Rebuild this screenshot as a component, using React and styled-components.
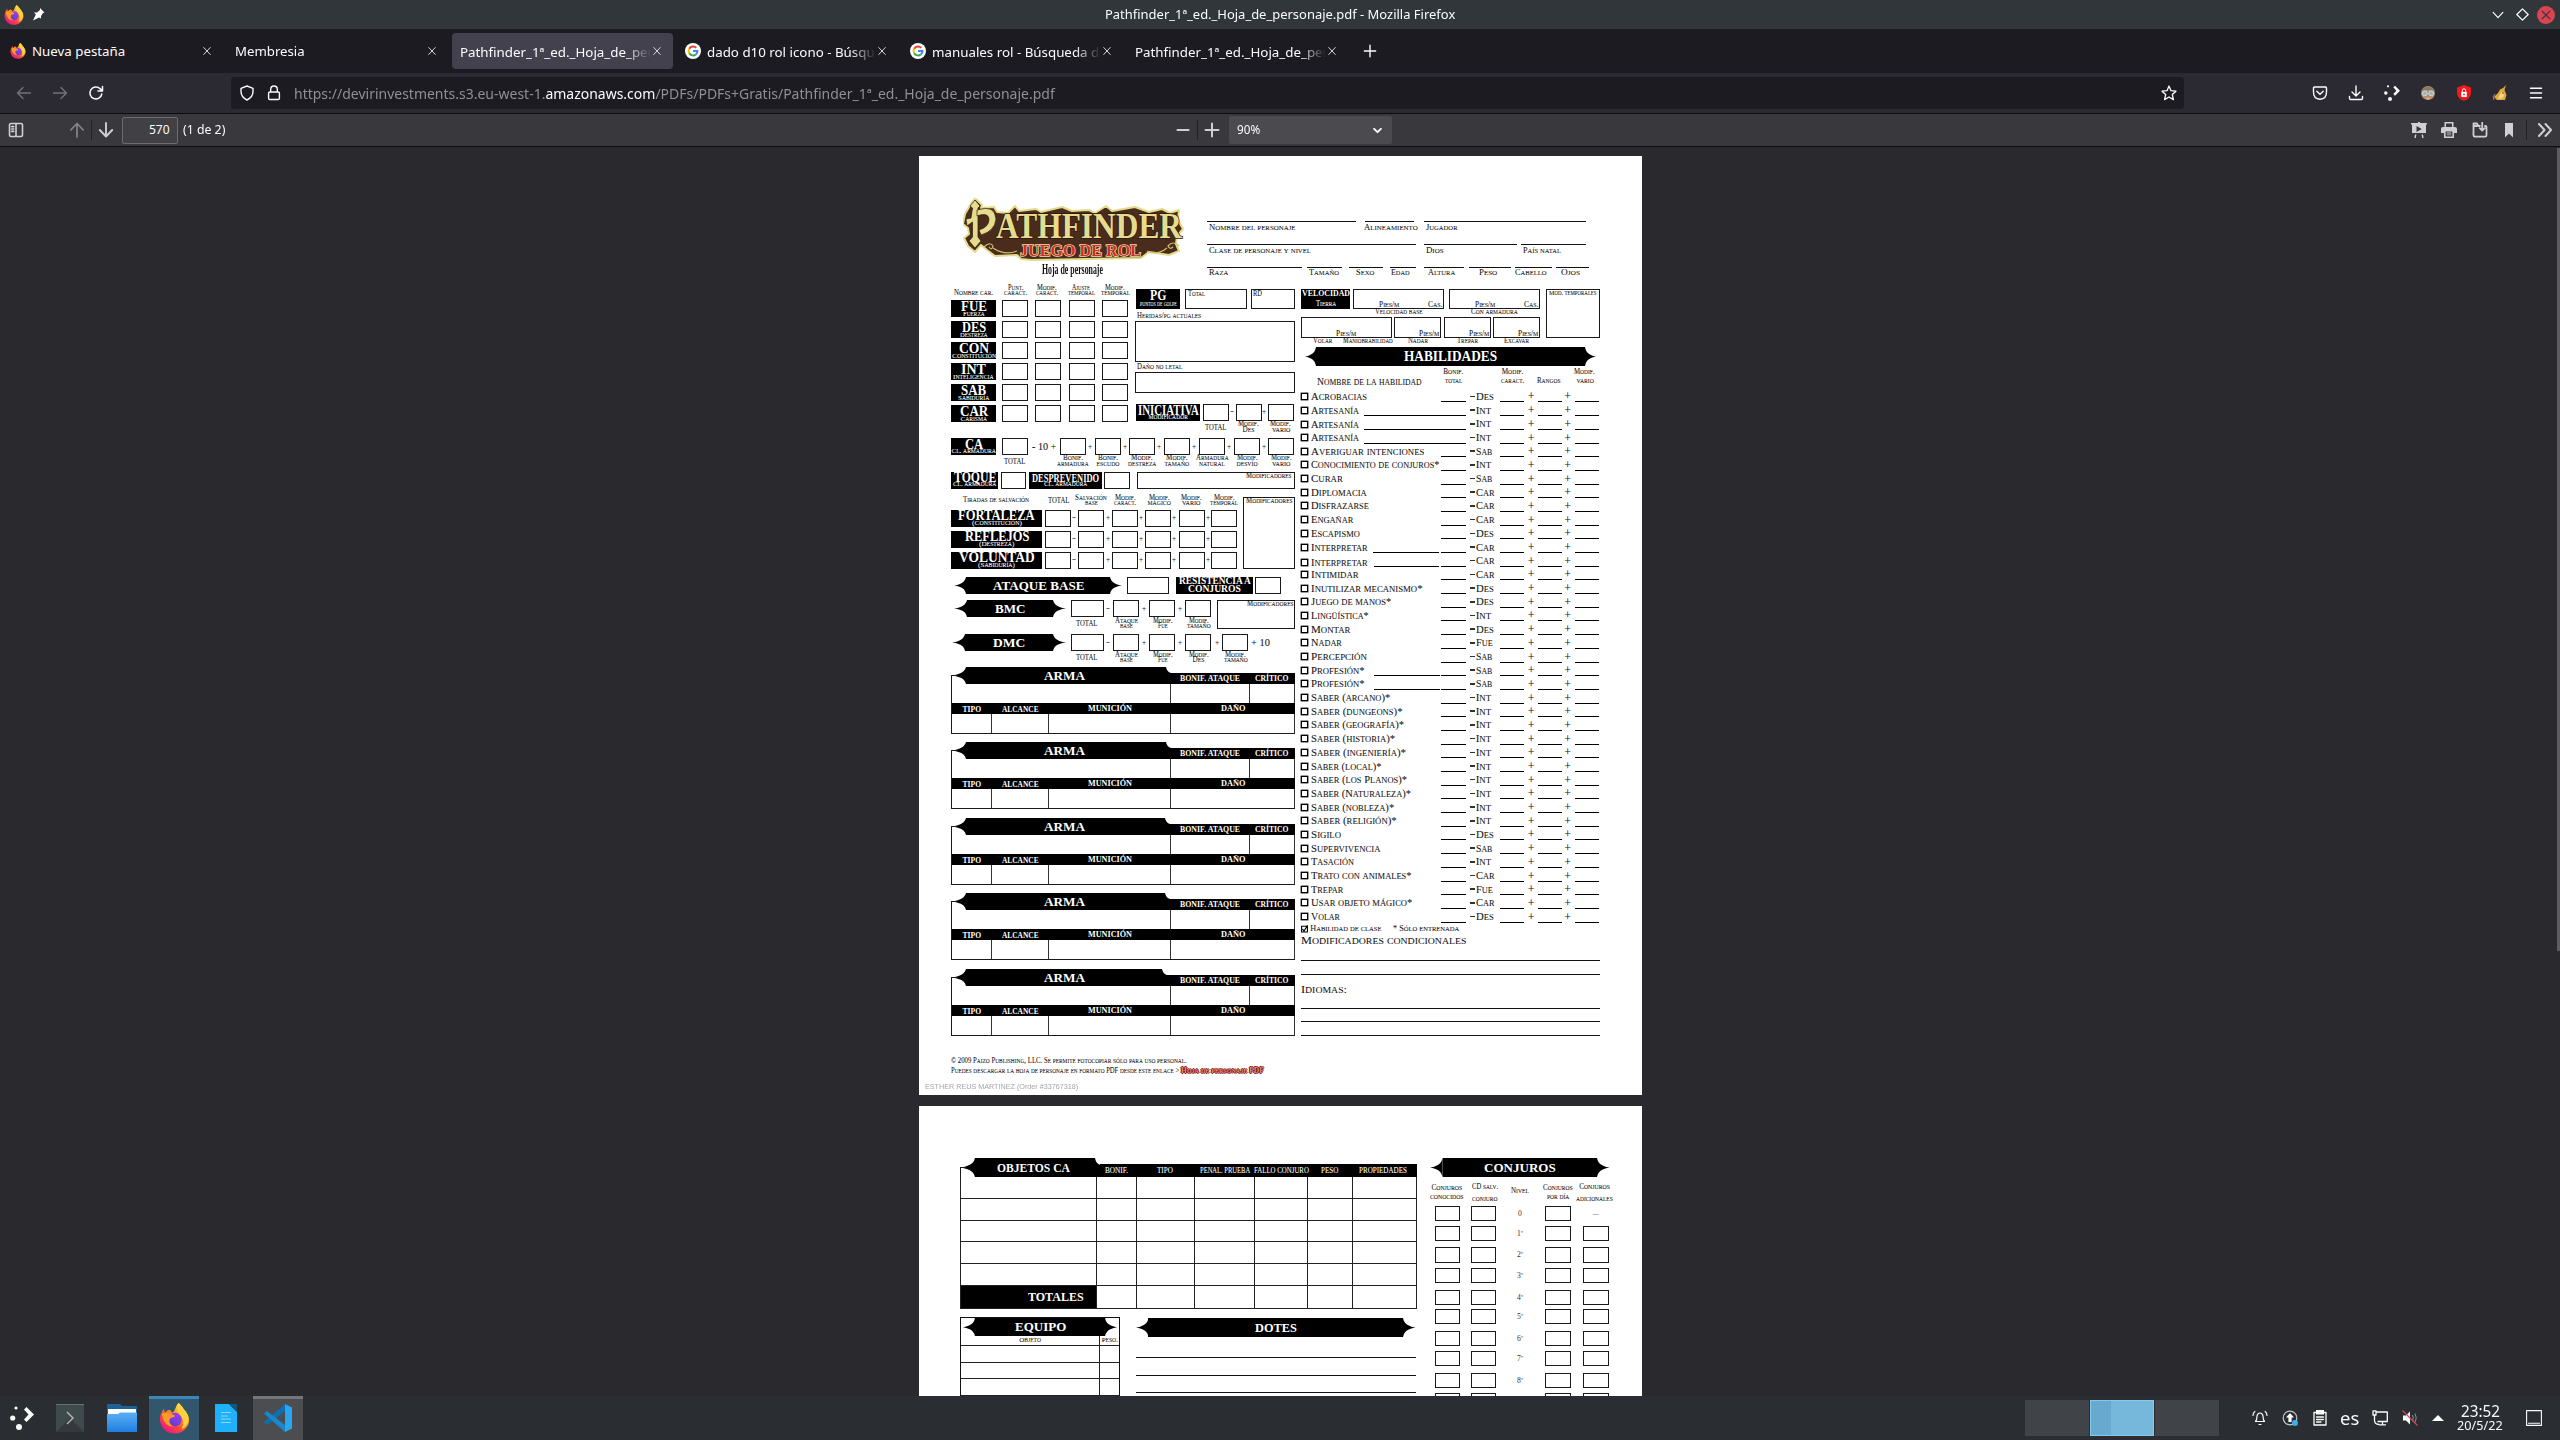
import React, { useLayoutEffect, useRef, useState } from 'react';
import styled, { createGlobalStyle } from 'styled-components';

const Global = createGlobalStyle`
  html, body { margin: 0; padding: 0; background: #2a2a2e; overflow: hidden; }
  * { box-sizing: border-box; }
  svg { display: block; flex: none; }
`;

const SANS = '"Noto Sans", "Liberation Sans", sans-serif';
const SERIF = '"Liberation Serif", serif';

/* ---------- text that is set to a measured width ---------- */

const FitBox = styled.span`
  display: block;
  flex: none;
  width: ${(p) => p.$w}px;
  height: ${(p) => p.$size}px;
  font: ${(p) => (p.$bold ? 700 : 400)} ${(p) => p.$size}px/1 ${(p) => p.$font || SERIF};
  color: ${(p) => p.$color || 'inherit'};
  text-shadow: ${(p) => p.$shadow || 'none'};
  -webkit-text-stroke: ${(p) => (!p.$font && !p.$bold ? '0.06px' : '0')};
`;
const FitText = styled.span`
  display: inline-block;
  white-space: pre;
  transform-origin: 0 50%;
`;
const Small = styled.span`
  font-size: 0.8em;
  text-transform: uppercase;
`;

const LOWER = /([a-zñáéíóúü]+)/;
const smallCaps = (text) =>
  typeof text === 'string' ? text.split(LOWER).map((s, i) => (i % 2 ? <Small key={i}>{s}</Small> : s)) : text;

function Fit({ w, size = 7, bold, font, color, shadow, children }) {
  const ref = useRef(null);
  const [k, setK] = useState(1);
  useLayoutEffect(() => {
    const n = ref.current.offsetWidth;
    if (n) setK(w / n);
  }, [w, size]);
  const drop = font ? 0 : 0.4;
  return (
    <FitBox $w={w} $size={size} $bold={bold} $font={font} $color={color} $shadow={shadow}>
      <FitText ref={ref} style={{ transform: `translateY(${drop}px) scaleX(${k})` }}>{font ? children : smallCaps(children)}</FitText>
    </FitBox>
  );
}

/* ---------- track layout: [start, size] pairs turned into grid tracks ---------- */

const tracks = (at, o) => {
  let p = o;
  return at
    .map(([s, n]) => {
      const g = Math.max(0, s - p);
      p = s + n;
      return `${g.toFixed(2)}px ${n}px`;
    })
    .join(' ');
};
const place = (at, axis) =>
  at.map((_, i) => `& > :nth-child(${i + 1}) { grid-${axis}: ${2 * i + 2}; }`).join('\n');

const Strip = styled.div`
  display: grid;
  width: 100%;
  height: ${(p) => (p.$h ? `${p.$h}px` : '100%')};
  grid-template-columns: ${(p) => tracks(p.$at, p.$o)};
  grid-template-rows: 100%;
  align-items: center;
  justify-items: center;
  & > * { grid-row: 1; }
  ${(p) => place(p.$at, 'column')}
`;
const Rows = styled.div`
  display: grid;
  width: 100%;
  height: 100%;
  grid-template-rows: ${(p) => tracks(p.$at, p.$o)};
  grid-template-columns: 100%;
  align-items: center;
  justify-items: ${(p) => p.$align || 'center'};
  & > * { grid-column: 1; }
  ${(p) => place(p.$at, 'row')}
`;

const Box = styled.div`
  width: 100%;
  height: 100%;
  border: ${(p) => p.$b || 1}px solid #1a1a1a;
  display: flex;
  align-items: ${(p) => p.$v || 'flex-start'};
  justify-content: ${(p) => p.$j || 'flex-start'};
  padding: ${(p) => p.$pad || '0'};
`;
const Plate = styled(Rows)`
  background: #000;
  color: #fff;
`;
const Rule = styled.div`
  width: 100%;
  height: 1px;
  background: #111;
`;
const PairGrid = styled.div`
  display: grid;
  grid-template-rows: ${(p) => p.$p}px ${(p) => p.$p}px;
  align-items: center;
  justify-items: center;
`;
const Pair = ({ a, b, pitch = 5.4 }) => (
  <PairGrid $p={pitch}>
    <Fit w={a[1]} size={7.2}>{a[0]}</Fit>
    <Fit w={b[1]} size={7.2}>{b[0]}</Fit>
  </PairGrid>
);
const Named = ({ main, mw, sub, sw, size = 14, y1 = 7, y2 = 14.4 }) => (
  <Plate $o={0} $at={[[y1, 0], [y2, 0]]}>
    <Fit w={mw} size={size} bold>{main}</Fit>
    <Fit w={sw} size={7}>{sub}</Fit>
  </Plate>
);
const Sign = ({ children }) => <Fit w={4.5} size={8}>{children}</Fit>;
const Total = () => <Fit w={21.5} size={7.8}>TOTAL</Fit>;

/* ---------- black ribbon with pointed ends ---------- */

const Ribbon = styled.div`
  display: flex;
  width: 100%;
  height: 100%;
`;
const RibbonBody = styled.div`
  flex: 1;
  background: #000;
  color: #fff;
  display: flex;
  align-items: center;
  justify-content: center;
`;
const Tip = ({ w = 12, flip, frame }) => (
  <svg width={w} height="100%" viewBox="0 0 12 18" preserveAspectRatio="none" transform={flip ? 'scale(-1 1)' : undefined}>
    <path d="M12.2 0H12Q11 5.5 6 7.3Q3.5 8.6 0 9Q3.5 9.4 6 10.7Q11 12.5 12 18H12.2Z" fill="#000" />
    {frame && <path d="M0 8.6H5V9.4H.8V18H0Z" fill="#1a1a1a" />}
  </svg>
);
const Notch = () => (
  <svg width="5" height="100%" viewBox="0 0 5 18" preserveAspectRatio="none">
    <path d="M0 0Q1 5.5 5 6.4V18H0Z" fill="#000" />
  </svg>
);
const Banner = ({ w, tip, size = 13.5, children }) => (
  <Ribbon>
    <Tip w={tip} />
    <RibbonBody><Fit w={w} size={size} bold>{children}</Fit></RibbonBody>
    <Tip w={tip} flip />
  </Ribbon>
);

/* ---------- logo ---------- */

const Logo = () => (
  <svg width="222" height="64" viewBox="0 0 222 64">
    <path
      d="M12 0L19 7L18 10L31 9L34 14L45 15L52 8L56 13L73 11L78 14L99 9L109 13L126 12L132 15L143 8L149 13L172 9L186 14L199 11L207 15L216 12L215 22L220 31L214 38L213 46L216 53L206 57L186 54L178 60L68 62L58 61L54 57L32 58L24 52L18 47L12 54L5 48L1 40L6 36L5 30L0 26L2 16L6 9Z"
      fill="#4a2c1c" stroke="#e4dc8c" strokeWidth="2" strokeLinejoin="round"
    />
    <path d="M21 49Q27 43 30 48Q29 53 26 49M30 50Q42 58 54 53M216 48Q210 42 205 48Q207 52 210 49M204 50Q194 58 184 53" fill="none" stroke="#cdbd72" strokeWidth="1.2" />
    <path d="M12 2L17 8L15 10V39L18 43L12 50L6 43L9.5 39V24L4 28L3 21L8 20L9.5 10L7 8Z" fill="#e6dc8e" stroke="#2e170c" strokeWidth=".7" />
    <path d="M14 12Q32 6 33 21Q32 33 18 37L16 32Q26 29 26 21Q25 14 14 18Z" fill="#e6dc8e" stroke="#2e170c" strokeWidth=".7" />
    <text x="33" y="40" textLength="186" lengthAdjust="spacingAndGlyphs" fontFamily="Liberation Serif, serif" fontWeight="700" fontSize="36" fill="#e6dc8e" stroke="#2e170c" strokeWidth="1.6" paintOrder="stroke">ATHFINDER</text>
    <text x="57" y="58" textLength="121" lengthAdjust="spacingAndGlyphs" fontFamily="Liberation Serif, serif" fontWeight="700" fontSize="16.5" fill="#cf2e2a" stroke="#ecdfa6" strokeWidth="1.4" paintOrder="stroke">JUEGO DE ROL</text>
  </svg>
);

/* ---------- page one ---------- */

const Sheet = styled.section`
  flex: none;
  width: 723px;
  height: ${(p) => p.$h}px;
  background: #fff;
  color: #111;
  overflow: hidden;
`;

const FIELD_LINES = [
  {
    y: 221,
    cells: [[1207, 149], [1365, 49], [1424, 162]],
    labels: [['Nombre del personaje', 1209, 87], ['Alineamiento', 1364, 54], ['Jugador', 1426, 32]],
  },
  {
    y: 244,
    cells: [[1207, 209], [1424, 93], [1521, 65]],
    labels: [['Clase de personaje y nivel', 1209, 102], ['Dios', 1426, 18], ['País natal', 1523, 38]],
  },
  {
    y: 267,
    cells: [[1207, 95], [1307, 35], [1349, 34], [1390, 26], [1424, 40], [1469, 42], [1515, 37], [1556, 33]],
    labels: [['Raza', 1209, 19], ['Tamaño', 1309, 30], ['Sexo', 1356, 18], ['Edad', 1391, 19], ['Altura', 1428, 27], ['Peso', 1479, 18], ['Cabello', 1515, 32], ['Ojos', 1561, 19]],
  },
];

const HojaTitle = styled.div`
  margin-left: -3px;
`;
const Header = () => (
  <Strip $h={84} $o={919} $at={[[963, 222], [1207, 382]]}>
    <Rows $o={198} $at={[[198, 64], [270, 0]]}>
      <Logo />
      <HojaTitle><Fit w={61} size={14} font={SERIF} bold>Hoja de personaje</Fit></HojaTitle>
    </Rows>
    <Rows $o={198} $at={[[221, 1], [227.3, 0], [244, 1], [250.2, 0], [267, 1], [272.5, 0]]}>
      {FIELD_LINES.flatMap((f) => [
        <Strip key={f.y} $h={1} $o={1207} $at={f.cells}>{f.cells.map((c) => <Rule key={c[0]} />)}</Strip>,
        <Strip key={`${f.y}l`} $h={8} $o={1207} $at={f.labels.map((l) => [l[1], l[2]])}>
          {f.labels.map((l) => <Fit key={l[0]} w={l[2]} size={8.8}>{l[0]}</Fit>)}
        </Strip>,
      ])}
    </Rows>
  </Strip>
);

const ABILITIES = [
  ['FUE', 26, 'Fuerza', 22], ['DES', 24, 'Destreza', 28], ['CON', 30, 'Constitución', 44],
  ['INT', 25, 'Inteligencia', 41], ['SAB', 25, 'Sabiduría', 31], ['CAR', 28, 'Carisma', 26],
];

const LowText = styled.div`
  padding-top: 5px;
`;
const Abilities = () => (
  <Rows $o={284} $at={[[291.3, 0], ...ABILITIES.map((_, i) => [300 + i * 21, 17])]}>
    <Strip $h={11} $o={951} $at={[[954, 39], [1015.7, 0], [1047.5, 0], [1081.5, 0], [1115.5, 0]]}>
      <LowText><Fit w={39} size={7.2}>Nombre car.</Fit></LowText>
      <Pair a={['Punt.', 16]} b={['caract.', 23]} />
      <Pair a={['Modif.', 20]} b={['caract.', 22]} />
      <Pair a={['Ajuste', 18]} b={['temporal', 27]} />
      <Pair a={['Modif.', 20]} b={['temporal', 29]} />
    </Strip>
    {ABILITIES.map(([m, mw, s, sw]) => (
      <Strip key={m} $o={951} $at={[[951, 45], [1002, 26], [1035, 26], [1069, 26], [1102, 26]]}>
        <Named main={m} mw={mw} sub={s} sw={sw} />
        <Box /><Box /><Box /><Box />
      </Strip>
    ))}
  </Rows>
);

const Inset = styled.div`
  padding-left: 2px;
`;
const Health = () => (
  <Rows $o={284} $align="start" $at={[[289, 20], [316.4, 0], [321, 41], [367.4, 0], [372, 21], [404, 17], [427.5, 0]]}>
    <Strip $o={1135} $at={[[1136, 44], [1185, 62], [1251, 44]]}>
      <Plate $o={0} $at={[[7, 0], [15.5, 0]]}>
        <Fit w={16} size={14} bold>PG</Fit>
        <Fit w={37} size={6.6}>puntos de golpe</Fit>
      </Plate>
      <Box $pad="1px 2px"><Fit w={17} size={7.2}>Total</Fit></Box>
      <Box $pad="1px 1px"><Fit w={9} size={7.2}>RD</Fit></Box>
    </Strip>
    <Inset><Fit w={64} size={7.2}>Heridas/pg actuales</Fit></Inset>
    <Box />
    <Inset><Fit w={45} size={7.2}>Daño no letal</Fit></Inset>
    <Box />
    <Strip $o={1135} $at={[[1136, 64], [1203, 26], [1232.5, 0], [1236, 26], [1264.6, 0], [1268, 26]]}>
      <Named main="INICIATIVA" mw={61} sub="modificador" sw={39} size={14} y1={6.7} y2={13.8} />
      <Box /><Sign>-</Sign><Box /><Sign>+</Sign><Box />
    </Strip>
    <Strip $h={11} $o={1135} $at={[[1216, 0], [1248.5, 0], [1280.5, 0]]}>
      <Total />
      <Pair a={['Modif.', 21]} b={['Des', 12]} />
      <Pair a={['Modif.', 21]} b={['vario', 18]} />
    </Strip>
  </Rows>
);

const CA_BOXES = [1060, 1095, 1129, 1164, 1199, 1234, 1268];
const ArmorClass = () => (
  <Strip $o={951} $at={[[951, 45], [1002, 26], [1032, 24], ...CA_BOXES.flatMap((x, i) => (i < 6 ? [[x, 26], [x + 30.2, 0]] : [[x, 26]]))]}>
    <Named main="CA" mw={18} sub="Cl. armadura" sw={44} y1={6.5} y2={13.8} />
    <Box />
    <Fit w={24} size={11}>- 10 +</Fit>
    {CA_BOXES.flatMap((x, i) => (i < 6 ? [<Box key={x} />, <Sign key={`s${x}`}>+</Sign>] : [<Box key={x} />]))}
  </Strip>
);
const CA_LABELS = [
  [['Bonif.', 20], ['armadura', 32]], [['Bonif.', 20], ['escudo', 23]], [['Modif.', 22], ['destreza', 28]],
  [['Modif.', 22], ['tamaño', 25]], [['Armadura', 33], ['natural', 26]], [['Modif.', 21], ['desvío', 21]], [['Modif.', 21], ['vario', 18]],
];

const SAVE_BOXES = [1045, 1078.5, 1112, 1145, 1179, 1211];
const SAVES = [['FORTALEZA', 77, '(Constitución)', 50], ['REFLEJOS', 64, '(Destreza)', 35], ['VOLUNTAD', 76, '(Sabiduría)', 37]];
const SaveNotes = styled.div`
  width: 100%;
  height: 100%;
  padding-top: 2px;
`;
const Saves = () => (
  <Strip $o={951} $at={[[951, 286], [1243, 52]]}>
    <Rows $o={495} $at={[[500.8, 0], [510, 17], [531, 17], [552, 17]]}>
      <Strip $h={11} $o={951} $at={[[963, 66], [1058.5, 0], [1091, 0], [1125, 0], [1159, 0], [1191, 0], [1224, 0]]}>
        <Fit w={66} size={7.2}>Tiradas de salvación</Fit>
        <Total />
        <Pair a={['Salvación', 32]} b={['base', 13]} />
        <Pair a={['Modif.', 21]} b={['caract.', 22]} />
        <Pair a={['Modif.', 21]} b={['mágico', 23]} />
        <Pair a={['Modif.', 21]} b={['vario', 18]} />
        <Pair a={['Modif.', 21]} b={['temporal', 28]} />
      </Strip>
      {SAVES.map(([m, mw, s, sw]) => (
        <Strip key={m} $o={951} $at={[[951, 91], ...SAVE_BOXES.flatMap((x, i) => (i < 5 ? [[x, 26], [x + 29.6, 0]] : [[x, 26]]))]}>
          <Named main={m} mw={mw} sub={s} sw={sw} y1={6} y2={13.4} />
          {SAVE_BOXES.flatMap((x, i) => (i < 5 ? [<Box key={x} />, <Sign key={`s${x}`}>{i ? '+' : '-'}</Sign>] : [<Box key={x} />]))}
        </Strip>
      ))}
    </Rows>
    <SaveNotes><Box $j="center"><Fit w={47} size={7.2}>Modificadores</Fit></Box></SaveNotes>
  </Strip>
);

const ManeuverRow = ({ name, w, x, n, extra }) => {
  const boxes = [1071, 1113, 1149, 1185, 1222.5].slice(0, n);
  const at = [[x, 1066 - x]];
  boxes.forEach((b, i) => {
    at.push([b, i ? 26 : 33]);
    if (i < n - 1) at.push([[1108, 1144, 1180.7, 1217][i], 0]);
  });
  if (extra) at.push([1251, 19]);
  return (
    <Strip $o={951} $at={at}>
      <Banner w={w} tip={13}>{name}</Banner>
      {boxes.flatMap((b, i) => (i < n - 1 ? [<Box key={b} />, <Sign key={`s${b}`}>{i ? '+' : '-'}</Sign>] : [<Box key={b} />]))}
      {extra && <Fit w={19} size={11}>+ 10</Fit>}
    </Strip>
  );
};

const WeaponHead = styled.div`
  display: flex;
  height: 17px;
  width: 100%;
`;
const WeaponTab = styled.div`
  width: ${(p) => p.$w}px;
  padding-right: ${(p) => p.$pr || 0}px;
  background: #000;
  color: #fff;
  display: flex;
  align-items: center;
  justify-content: center;
`;
const WeaponCaps = styled.div`
  flex: 1;
  align-self: flex-end;
  height: 11px;
  background: #000;
  color: #fff;
`;
const Cells = styled.div`
  display: grid;
  width: 100%;
  height: ${(p) => p.$h}px;
  grid-template-columns: ${(p) => p.$cols};
  background: ${(p) => (p.$dark ? '#000' : 'transparent')};
  color: ${(p) => (p.$dark ? '#fff' : 'inherit')};
  align-items: center;
  justify-items: center;
  border-left: 1px solid #1a1a1a;
  border-bottom: ${(p) => (p.$end ? '1px solid #1a1a1a' : '0')};
`;
const Cell = styled.div`
  width: 100%;
  height: 100%;
  border-right: 1px solid #333;
`;
const WeaponLabel = styled.div`
  padding-top: 2px;
`;
const Weapon = ({ tab = 199 }) => (
  <div>
    <WeaponHead>
      <Tip w={15} frame />
      <WeaponTab $w={tab} $pr={tab - 196}><Fit w={41} size={13.5} bold>ARMA</Fit></WeaponTab>
      <Notch />
      <WeaponCaps>
        <Strip $o={951 + 20 + tab} $at={[[1210, 0], [1271.5, 0]]}>
          <Fit w={60} size={7.6} bold>BONIF. ATAQUE</Fit>
          <Fit w={33} size={7.6} bold>CRÍTICO</Fit>
        </Strip>
      </WeaponCaps>
    </WeaponHead>
    <Cells $h={19} $cols="219px 79px 1fr"><Cell /><Cell /><Cell /></Cells>
    <Cells $h={11} $dark $cols="40px 57px 122px 1fr">
      <WeaponLabel><Fit w={19} size={7.6} bold>TIPO</Fit></WeaponLabel>
      <WeaponLabel><Fit w={37} size={7.6} bold>ALCANCE</Fit></WeaponLabel>
      <Fit w={44} size={7.6} bold>MUNICIÓN</Fit>
      <Fit w={24} size={7.6} bold>DAÑO</Fit>
    </Cells>
    <Cells $h={20} $end $cols="40px 57px 122px 1fr"><Cell /><Cell /><Cell /><Cell /></Cells>
  </div>
);

const Full = styled.div`
  width: 100%;
  height: 100%;
`;
const LeftColumn = () => (
  <Rows
    $o={284}
    $at={[[284, 150], [438, 17], [461.5, 0], [472, 17], [495, 74], [577, 17], [600, 29], [634, 17], [658.3, 0], [667, 67], [742.4, 67], [818, 67], [893, 67], [969, 67]]}
  >
    <Strip $o={951} $at={[[951, 177], [1135, 160]]}>
      <Abilities />
      <Health />
    </Strip>
    <ArmorClass />
    <Strip $h={11} $o={951} $at={[[1014.5, 0], ...CA_BOXES.map((x) => [x + 13, 0])]}>
      <Total />
      {CA_LABELS.map(([a, b], i) => <Pair key={i} a={a} b={b} />)}
    </Strip>
    <Strip $o={951} $at={[[951, 47], [1001, 25], [1029, 73], [1104, 26], [1137, 158]]}>
      <Named main="TOQUE" mw={42} sub="Cl. armadura" sw={43} y1={5.8} y2={13} />
      <Box />
      <Named main="DESPREVENIDO" mw={67} sub="Cl. armadura" sw={43} size={13} y1={5.8} y2={13} />
      <Box />
      <Box $j="flex-end" $pad="0 2px 0 0"><Fit w={46} size={7.2}>Modificadores</Fit></Box>
    </Strip>
    <Saves />
    <Strip $o={951} $at={[[954, 168], [1127, 42], [1176, 77], [1255, 26]]}>
      <Banner w={91} tip={12}>ATAQUE BASE</Banner>
      <Box />
      <Plate $o={0} $at={[[4.2, 0], [12.4, 0]]}>
        <Fit w={72} size={9.8} bold>RESISTENCIA A</Fit>
        <Fit w={53} size={9.8} bold>CONJUROS</Fit>
      </Plate>
      <Box />
    </Strip>
    <Strip $o={951} $at={[[951, 262], [1217, 78]]}>
      <Rows $o={600} $at={[[600, 17], [624.2, 0]]}>
        <ManeuverRow name="BMC" w={31} x={954} n={4} />
        <Strip $h={11} $o={951} $at={[[1087, 0], [1126, 0], [1162.5, 0], [1198.5, 0]]}>
          <Total />
          <Pair a={['Ataque', 23]} b={['base', 13]} />
          <Pair a={['Modif.', 20]} b={['Fue', 10]} />
          <Pair a={['Modif.', 20]} b={['tamaño', 24]} />
        </Strip>
      </Rows>
      <Box $j="flex-end"><Fit w={47} size={7.2}>Modificadores</Fit></Box>
    </Strip>
    <ManeuverRow name="DMC" w={32} x={952} n={5} extra />
    <Strip $h={11} $o={951} $at={[[1087, 0], [1126, 0], [1162.5, 0], [1198.5, 0], [1235.5, 0]]}>
      <Total />
      <Pair a={['Ataque', 23]} b={['base', 13]} />
      <Pair a={['Modif.', 20]} b={['Fue', 10]} />
      <Pair a={['Modif.', 20]} b={['Des', 12]} />
      <Pair a={['Modif.', 21]} b={['tamaño', 24]} />
    </Strip>
    <Full><Weapon tab={200} /></Full>
    <Full><Weapon tab={200} /></Full>
    <Full><Weapon tab={199} /></Full>
    <Full><Weapon tab={199} /></Full>
    <Full><Weapon tab={196} /></Full>
  </Rows>
);

const Units = styled.div`
  display: flex;
  gap: 29px;
`;
const BoxedUnits = ({ cas, pr = 1 }) => (
  <Box $v="flex-end" $j="flex-end" $pad={`0 ${pr}px 0 0`}>
    <Units>
      <Fit w={20} size={7.4}>Pies/m</Fit>
      {cas && <Fit w={14} size={7.4}>Cas.</Fit>}
    </Units>
  </Box>
);

const Speed = () => (
  <Strip $o={1301} $at={[[1301, 239], [1546, 54]]}>
    <Rows $o={289} $at={[[289, 20], [312, 0], [317, 21], [340.8, 0]]}>
      <Strip $o={1301} $at={[[1301, 49], [1353, 91], [1449, 91]]}>
        <Plate $o={0} $at={[[4.2, 0], [14.6, 0]]}>
          <Fit w={48} size={9} bold>VELOCIDAD</Fit>
          <Fit w={20} size={7.4}>Tierra</Fit>
        </Plate>
        <BoxedUnits cas />
        <BoxedUnits cas />
      </Strip>
      <Strip $h={7} $o={1301} $at={[[1375, 48], [1471, 47]]}>
        <Fit w={48} size={7.4}>Velocidad base</Fit>
        <Fit w={47} size={7.4}>Con armadura</Fit>
      </Strip>
      <Strip $o={1301} $at={[[1301, 91], [1394, 47], [1444, 47], [1493, 47]]}>
        <BoxedUnits pr={35} /><BoxedUnits /><BoxedUnits /><BoxedUnits />
      </Strip>
      <Strip $h={7} $o={1301} $at={[[1313, 19], [1343, 50], [1408, 20], [1457, 21], [1504, 25]]}>
        <Fit w={19} size={7.4}>Volar</Fit>
        <Fit w={50} size={7.4}>Maniobrabilidad</Fit>
        <Fit w={20} size={7.4}>Nadar</Fit>
        <Fit w={21} size={7.4}>Trepar</Fit>
        <Fit w={25} size={7.4}>Excavar</Fit>
      </Strip>
    </Rows>
    <Box $j="center"><Fit w={48} size={7}>Mod. temporales</Fit></Box>
  </Strip>
);

const SKILLS = [
  ['Acrobacias', 55.7, 'Des'], ['Artesanía', 48, 'Int', 1364, 77], ['Artesanía', 48, 'Int', 1364, 77, 1], ['Artesanía', 48, 'Int', 1364, 77],
  ['Averiguar intenciones', 113, 'Sab'], ['Conocimiento de conjuros*', 128, 'Int'], ['Curar', 32, 'Sab'], ['Diplomacia', 56, 'Car'],
  ['Disfrazarse', 58, 'Car'], ['Engañar', 42, 'Car'], ['Escapismo', 49, 'Des'], ['Interpretar', 57, 'Car', 1373, 66],
  ['Interpretar', 57, 'Car', 1374, 65, 4], ['Intimidar', 48, 'Car'], ['Inutilizar mecanismo*', 112, 'Des'], ['Juego de manos*', 80, 'Des'],
  ['Lingüística*', 58, 'Int'], ['Montar', 39, 'Des'], ['Nadar', 31, 'Fue'], ['Percepción', 56, 'Sab'],
  ['Profesión*', 54, 'Sab', 1374, 66], ['Profesión*', 54, 'Sab', 1374, 66], ['Saber (arcano)*', 79, 'Int'], ['Saber (dungeons)*', 92, 'Int'],
  ['Saber (geografía)*', 93, 'Int'], ['Saber (historia)*', 84, 'Int'], ['Saber (ingeniería)*', 95, 'Int'], ['Saber (local)*', 71, 'Int'],
  ['Saber (los Planos)*', 96, 'Int'], ['Saber (Naturaleza)*', 100, 'Int'], ['Saber (nobleza)*', 83, 'Int'], ['Saber (religión)*', 86, 'Int'],
  ['Sigilo', 30, 'Des'], ['Supervivencia', 69, 'Sab'], ['Tasación', 43, 'Int'], ['Trato con animales*', 101, 'Car'],
  ['Trepar', 32, 'Fue'], ['Usar objeto mágico*', 101, 'Car'], ['Volar', 29, 'Des'],
];
const STAT_W = { Des: 17.5, Int: 15, Sab: 16, Car: 19, Fue: 17 };

const SkillList = styled.div`
  width: 100%;
  height: 100%;
  display: grid;
  grid-auto-rows: 13.7px;
`;
const Tick = styled.span`
  width: 7px;
  height: 7px;
  border: 1px solid #000;
  box-shadow: 0 0 0 0.4px #000;
  margin-top: ${(p) => p.$dy || 0}px;
`;
const Left = styled.div`
  width: 100%;
  display: flex;
  padding-top: ${(p) => p.$dy || 0}px;
`;
const Under = styled.span`
  width: 100%;
  height: 1px;
  align-self: end;
  margin-bottom: 0.8px;
  background: #000;
`;
const Dash = styled.span`
  width: 100%;
  height: 1.6px;
  background: #333;
`;
const Skill = ({ s }) => {
  const [name, w, stat, bx = 1439, bw = 0, dy = 0] = s;
  return (
    <Strip $o={1301} $at={[[1301, 7], [1311, Math.min(w, bx - 1311)], [bx, bw], [1441.3, 24.5], [1470, 5.5], [1475.7, 20], [1500, 24], [1531.3, 0], [1537.7, 24.3], [1567.7, 0], [1575, 24.5]]}>
      <Tick $dy={dy} />
      <Left $dy={dy}><Fit w={w} size={11}>{name}</Fit></Left>
      <Under />
      <Under />
      <Dash />
      <Left><Fit w={STAT_W[stat]} size={11}>{stat}</Fit></Left>
      <Under />
      <Fit w={7} size={12}>+</Fit>
      <Under />
      <Fit w={7} size={12}>+</Fit>
      <Under />
    </Strip>
  );
};

const RightColumn = () => (
  <Rows
    $o={284}
    $align="start"
    $at={[[289, 49], [347, 19], [377, 0], [389.6, 534.3], [929.2, 0], [941, 0], [960, 1], [974, 1], [989.3, 0], [1008, 1], [1021, 1], [1035, 1]]}
  >
    <Speed />
    <Strip $o={1301} $at={[[1304.5, 291.5]]}><Banner w={93} tip={11} size={14}>HABILIDADES</Banner></Strip>
    <Strip $h={18.4} $o={1301} $at={[[1316.7, 105], [1453.3, 0], [1512.7, 0], [1549, 0], [1585, 0]]}>
      <PairGrid $p={9.3}><span /><Fit w={105} size={9.8}>Nombre de la habilidad</Fit></PairGrid>
      <Pair pitch={9.3} a={['Bonif.', 20]} b={['total', 17]} />
      <Pair pitch={9.3} a={['Modif.', 22]} b={['caract.', 23]} />
      <PairGrid $p={9.3}><span /><Fit w={24} size={7.2}>Rangos</Fit></PairGrid>
      <Pair pitch={9.3} a={['Modif.', 21]} b={['vario', 17]} />
    </Strip>
    <SkillList>{SKILLS.map((s, i) => <Skill key={i} s={s} />)}</SkillList>
    <Strip $h={8} $o={1301} $at={[[1301, 7], [1310.3, 71], [1393, 66]]}>
      <svg width="7" height="8" viewBox="0 0 7 8"><path d="M.6 1.3H6.4V7H.6ZM1.5 4L3 6L6.6 .3" fill="none" stroke="#000" strokeWidth="1.1" /></svg>
      <Fit w={71} size={8.2}>Habilidad de clase</Fit>
      <Fit w={66} size={8.2}>* Sólo entrenada</Fit>
    </Strip>
    <Fit w={165} size={11}>Modificadores condicionales</Fit>
    <Rule /><Rule />
    <Fit w={45.5} size={11}>Idiomas:</Fit>
    <Rule /><Rule /><Rule />
  </Rows>
);

const PageOne = () => (
  <Sheet $h={939}>
    <Rows $o={156} $at={[[198, 84], [284, 757], [1060.7, 0], [1070.7, 0], [1087.3, 0]]}>
      <Header />
      <Strip $o={919} $at={[[951, 344], [1301, 299]]}>
        <LeftColumn />
        <RightColumn />
      </Strip>
      <Strip $h={8} $o={919} $at={[[951, 236]]}>
        <Fit w={236} size={7.8}>© 2009 Paizo Publishing, LLC. Se permite fotocopiar sólo para uso personal.</Fit>
      </Strip>
      <Strip $h={8} $o={919} $at={[[951, 228], [1181, 83]]}>
        <Fit w={228} size={7.8}>{'Puedes descargar la hoja de personaje en formato PDF desde este enlace >'}</Fit>
        <Fit w={83} size={8.4} bold color="#e8948c" shadow="0 0 1px #7a0d0d, 1px 0 0 #7a0d0d, -1px 0 0 #7a0d0d, 0 1px 0 #7a0d0d, 0 -1px 0 #7a0d0d">Hoja de personaje PDF</Fit>
      </Strip>
      <Strip $h={8} $o={919} $at={[[925, 153]]}>
        <Fit w={153} size={8} font={'"Liberation Sans", sans-serif'} color="#a3a5aa">ESTHER REUS MARTINEZ (Order #33767318)</Fit>
      </Strip>
    </Rows>
  </Sheet>
);

/* ---------- page two ---------- */

const ObjHead = styled.div`
  display: flex;
  width: 100%;
  height: 19px;
`;
const ObjCaps = styled.div`
  flex: 1;
  align-self: flex-end;
  height: 13px;
  padding-top: 1px;
  background: #000;
  color: #fff;
`;
const ObjGrid = styled.div`
  display: grid;
  grid-template-columns: 136px 39.5px 58.5px 59.5px 53px 45px 1fr;
  grid-template-rows: 21.5px 22px 21.5px 21.5px 22px 23.5px;
  border-left: 1px solid #222;
`;
const ObjCell = styled.div`
  border-right: 1px solid #222;
  border-bottom: 1px solid #222;
  background: ${(p) => (p.$dark ? '#000' : 'none')};
  color: #fff;
  display: flex;
  align-items: center;
  justify-content: flex-end;
  padding-right: 12px;
`;
const Objects = () => (
  <div>
    <ObjHead>
      <Tip w={15} frame />
      <WeaponTab $w={120} $pr={3}><Fit w={73} size={13.5} bold>OBJETOS CA</Fit></WeaponTab>
      <Notch />
      <ObjCaps>
        <Strip $o={1100} $at={[[1116, 0], [1165, 0], [1225, 0], [1281, 0], [1329.4, 0], [1383, 0]]}>
          <Fit w={23} size={7.6}>BONIF.</Fit>
          <Fit w={16} size={7.6}>TIPO</Fit>
          <Fit w={50} size={7.6}>PENAL. PRUEBA</Fit>
          <Fit w={55} size={7.6}>FALLO CONJURO</Fit>
          <Fit w={17.7} size={7.6}>PESO</Fit>
          <Fit w={47.5} size={7.6}>PROPIEDADES</Fit>
        </Strip>
      </ObjCaps>
    </ObjHead>
    <ObjGrid>
      {Array.from({ length: 42 }, (_, i) => (
        <ObjCell key={i} $dark={i === 35}>{i === 35 && <Fit w={56} size={13.5} bold>TOTALES</Fit>}</ObjCell>
      ))}
    </ObjGrid>
  </div>
);

const Gear = styled.div`
  width: 100%;
  height: 100%;
  border: 1px solid #111;
  border-bottom: 0;
  display: flex;
  flex-direction: column;
`;
const GearBanner = styled.div`
  height: 19px;
  padding: 0 2px;
`;
const GearRow = styled.div`
  display: grid;
  grid-template-columns: 139.4px 1fr;
  height: ${(p) => p.$h}px;
  flex: none;
  border-bottom: 1px solid #222;
  & > * { display: flex; align-items: center; justify-content: center; }
  & > :first-child { border-right: 1px solid #222; }
`;

const LEVEL_ROWS = [1206, 1226, 1247.5, 1268, 1290, 1309, 1331, 1351, 1373, 1393];
const LEVELS = ['0', '1º', '2º', '3º', '4º', '5º', '6º', '7º', '8º', ''];
const NivelBox = styled.div`
  padding-bottom: 6px;
`;
const Spells = () => (
  <Rows $o={1158} $at={[[1158, 19], [1193.3, 0], ...LEVEL_ROWS.map((y) => [y, 15.3])]}>
    <Banner w={71.5} tip={12.5}>CONJUROS</Banner>
    <Strip $h={14} $o={1430} $at={[[1447, 0], [1485.3, 0], [1520, 0], [1558, 0], [1594.7, 0]]}>
      <Pair pitch={9.4} a={['Conjuros', 31]} b={['conocidos', 34]} />
      <Pair pitch={12.4} a={['CD salv.', 26]} b={['conjuro', 26]} />
      <NivelBox><Fit w={18} size={7.4}>Nivel</Fit></NivelBox>
      <Pair pitch={9.4} a={['Conjuros', 30]} b={['por día', 22]} />
      <Pair pitch={12.4} a={['Conjuros', 31]} b={['adicionales', 37]} />
    </Strip>
    {LEVEL_ROWS.map((y, i) => (
      <Strip key={y} $o={1430} $at={[[1434.5, 25.5], [1470.5, 25.5], [1520, 0], [1545, 25.5], [1583, 25.5]]}>
        <Box $b={1.5} />
        <Box $b={1.5} />
        {i < 9 ? <Fit w={LEVELS[i].length > 1 ? 6 : 4} size={7.6} font={SERIF} color="#333">{LEVELS[i]}</Fit> : <span />}
        <Box $b={1.5} />
        {i ? <Box $b={1.5} /> : <Fit w={6} size={6} font={SERIF}>—</Fit>}
      </Strip>
    ))}
  </Rows>
);

const Shift = styled.div`
  width: 100%;
  height: 100%;
  padding-top: 52px;
`;
const PageTwo = () => (
  <Sheet $h={290}>
    <Strip $h={290} $o={919} $at={[[960, 456.5], [1430, 179]]}>
      <Rows $o={1106} $at={[[1158, 151.5], [1317, 79]]}>
        <Full><Objects /></Full>
        <Strip $o={960} $at={[[960, 160], [1135.7, 280]]}>
          <Gear>
            <GearBanner><Banner w={51} tip={12}>EQUIPO</Banner></GearBanner>
            <GearRow $h={9.5}>
              <div><Fit w={22} size={7}>Objeto</Fit></div>
              <div><Fit w={16} size={7}>Peso.</Fit></div>
            </GearRow>
            <GearRow $h={17}><i /><i /></GearRow>
            <GearRow $h={16.6}><i /><i /></GearRow>
            <GearRow $h={16.6}><i /><i /></GearRow>
          </Gear>
          <Rows $o={1317} $at={[[1318, 19], [1357, 1], [1375, 1], [1392, 1]]}>
            <Banner w={42} tip={12.5}>DOTES</Banner>
            <Rule /><Rule /><Rule />
          </Rows>
        </Strip>
      </Rows>
      <Shift><Spells /></Shift>
    </Strip>
  </Sheet>
);

/* ---------- browser chrome ---------- */

const Screen = styled.div`
  width: 2560px;
  height: 1440px;
  display: flex;
  flex-direction: column;
  background: #2a2a2e;
  color: #fbfbfe;
  font-family: ${SANS};
  overflow: hidden;
`;
const TitleBar = styled.header`
  height: 29px;
  background: #31363b;
  color: #fcfcfc;
`;
const TabBar = styled.div`
  height: 44px;
  background: #1c1b22;
  display: flex;
  padding-left: 2px;
`;
const Tab = styled.div`
  width: 221px;
  margin: 4px 4px 4px 0;
  height: 36px;
  border-radius: 4px;
  background: ${(p) => (p.$on ? '#42414d' : 'none')};
  display: flex;
  align-items: center;
  padding: 0 12px 0 8px;
  gap: 2px;
`;
const TabIcon = styled.span`
  margin-right: 4px;
`;
const TabText = styled.div`
  flex: 1;
  min-width: 0;
  overflow: hidden;
  white-space: nowrap;
  font: 400 13.33px/20px ${SANS};
  padding: ${(p) => (p.$fade ? '3px 0 1px' : '6px 0 4px')};
  mask-image: ${(p) => (p.$fade ? 'linear-gradient(to left, transparent, #000 26px)' : 'none')};
`;
const TabClose = styled.span`
  padding-bottom: 1px;
`;
const NavBar = styled.div`
  height: 40px;
  background: #2b2a33;
`;
const Url = styled.div`
  width: 100%;
  height: 32px;
  border-radius: 4px;
  background: #1c1b22;
  display: flex;
  align-items: center;
  padding: 0 7px 0 8px;
`;
const UrlText = styled.div`
  flex: 1;
  color: #8f8f97;
  b { font-weight: 400; color: #fbfbfe; }
`;
const Slot = styled.div`
  width: ${(p) => p.$w || 16}px;
  display: flex;
  justify-content: center;
`;
const PdfBar = styled.div`
  height: 34px;
  background: #38383d;
  border-top: 1px solid #0c0c0d;
  border-bottom: 1px solid #0c0c0d;
`;
const PageInput = styled.div`
  width: 100%;
  height: 27px;
  border: 1px solid #6b6b70;
  border-radius: 2px;
  background: #404045;
  display: flex;
  align-items: center;
  justify-content: flex-end;
  padding-right: 7px;
`;
const Zoom = styled.div`
  width: 100%;
  height: 28px;
  border-radius: 2px;
  background: #4a4a4f;
  display: flex;
  align-items: center;
  justify-content: space-between;
  padding: 0 10px 0 8px;
`;
const Split = styled.span`
  width: 1px;
  height: 20px;
  background: #222226;
`;
const Viewer = styled.main`
  height: 1249px;
  background: #2a2a2e;
  display: flex;
  justify-content: space-between;
  overflow: hidden;
`;
const Pages = styled.div`
  margin-left: 919px;
  display: flex;
  flex-direction: column;
  gap: 11px;
  padding-top: 9px;
`;
const Scroll = styled.div`
  width: 3px;
  height: 803px;
  margin-top: 1px;
  background: #5c5c61;
`;
const PlusBox = styled.div`
  align-self: center;
`;

const Firefox = ({ s, id }) => (
  <svg width={s} height={s} viewBox="0 0 32 32">
    <defs>
      <linearGradient id={`${id}a`} x1=".85" y1=".1" x2=".2" y2=".95">
        <stop offset="0" stopColor="#fff44f" /><stop offset=".35" stopColor="#ff9a1f" />
        <stop offset=".65" stopColor="#ff4a3c" /><stop offset="1" stopColor="#e31587" />
      </linearGradient>
      <linearGradient id={`${id}b`} x1=".8" y1="0" x2=".2" y2="1">
        <stop offset="0" stopColor="#a33cf2" /><stop offset="1" stopColor="#5b3fc8" />
      </linearGradient>
    </defs>
    <path d="M20 0C24 3 25 6 27 8C30 12 31.5 15 31 19C30 26 24 31.5 16 31.5C7 31.5 1 25 1 17C1 12 3 9 5 6L6 10C8 8 9 7 11 7L14 10C17 8 17 3 20 0Z" fill={`url(#${id}a)`} />
    <circle cx="16.5" cy="17" r="7" fill={`url(#${id}b)`} />
    <path d="M3 11C7 9 12 10 17 13.5C15 15.5 12 14.5 11 17C10 20 12 23 15 24C9 25 4 20 3 11Z" fill="#ff9a24" />
    <path d="M20 0C24 3 25 6 27 8C30 12 31 15 30 19C29 23 26 26 23 27C26 23 25.5 17 22.5 13C19 9 17.5 5 20 0Z" fill="#ffd33e" />
  </svg>
);
const Google = () => (
  <svg width="16" height="16" viewBox="0 0 16 16">
    <circle cx="8" cy="8" r="8" fill="#fff" />
    <path d="M4.2 5.7A4.5 4.5 0 0 1 11.3 4.8" fill="none" stroke="#ea4335" strokeWidth="2" />
    <path d="M4.2 5.7A4.5 4.5 0 0 0 4.2 10.3" fill="none" stroke="#fbbc05" strokeWidth="2" />
    <path d="M4.2 10.3A4.5 4.5 0 0 0 10.8 11.5" fill="none" stroke="#34a853" strokeWidth="2" />
    <path d="M8 8H12.5A4.5 4.5 0 0 1 10.8 11.5" fill="none" stroke="#4285f4" strokeWidth="2" />
  </svg>
);
const Ico = ({ d, s = 16, c = '#fbfbfe', w = 1.3, fill = 'none', children }) => (
  <svg width={s} height={s} viewBox="0 0 16 16">
    {d && <path d={d} fill={fill} stroke={w ? c : 'none'} strokeWidth={w} strokeLinecap="round" strokeLinejoin="round" />}
    {children}
  </svg>
);
const X = () => <Ico s={8} w={2} c="#d8d8dc" d="M1.5 1L14.5 15M14.5 1L1.5 15" />;
const PlasmaDots = ({ s }) => (
  <svg width={s} height={s} viewBox="0 0 24 24" fill="#fcfcfc">
    <circle cx="6" cy="2" r="1.6" /><circle cx="2.7" cy="12" r="2.6" /><circle cx="9" cy="21" r="3" />
    <path d="M14 3.5L16.5 1L24 8.5L16.5 16L14 13.5L18.5 8.5Z" />
  </svg>
);

const TABS = [
  { t: 'Nueva pestaña', icon: 'f', w: 93 }, { t: 'Membresia', w: 69.5 },
  { t: 'Pathfinder_1ª_ed._Hoja_de_personaje.pdf', on: true, fade: true },
  { t: 'dado d10 rol icono - Búsqueda de Google', icon: 'g', fade: true },
  { t: 'manuales rol - Búsqueda de Google', icon: 'g', fade: true },
  { t: 'Pathfinder_1ª_ed._Hoja_de_personaje.pdf', fade: true },
];

const Chrome = () => (
  <>
    <TitleBar>
      <Strip $h={29} $o={0} $at={[[3, 21], [32, 13], [1105, 350], [2492, 12], [2516, 13], [2537, 18]]}>
        <Firefox s={20} id="t" />
        <svg width="13" height="13" viewBox="0 0 13 13"><path d="M8 0L12.5 4.5L11 5L9 8V10.5L7 9.5L1 12.5L3.8 6.5L2 4.5H5L8 2Z" fill="#fff" /></svg>
        <Fit w={350} size={13.3} font={SANS}>Pathfinder_1ª_ed._Hoja_de_personaje.pdf - Mozilla Firefox</Fit>
        <Ico s={12} w={1.6} d="M1.5 4.5L8 11.5L14.5 4.5" />
        <Ico s={13} w={1.5} d="M8 1L15 8L8 15L1 8Z" />
        <svg width="18" height="18" viewBox="0 0 18 18"><circle cx="9" cy="9" r="9" fill="#da4453" /><path d="M4.8 4.8L13.2 13.2M13.2 4.8L4.8 13.2" stroke="#31363b" strokeWidth="1.2" /></svg>
      </Strip>
    </TitleBar>
    <TabBar>
      {TABS.map((t, i) => (
        <Tab key={i} $on={t.on}>
          {t.icon && <TabIcon>{t.icon === 'f' ? <Firefox s={16} id="n" /> : <Google />}</TabIcon>}
          <TabText $fade={t.fade}>{t.w ? <Fit w={t.w} size={13.3} font={SANS}>{t.t}</Fit> : t.t}</TabText>
          <TabClose><X /></TabClose>
        </Tab>
      ))}
      <Slot $w={35}><PlusBox><Ico s={14} w={1.6} d="M8 1.5V14.5M1.5 8H14.5" /></PlusBox></Slot>
    </TabBar>
    <NavBar>
      <Strip $o={0} $at={[[16, 16], [52, 16], [88, 16], [231, 1953], [2312, 16], [2348, 16], [2384, 16], [2420, 16], [2456, 16], [2492, 16], [2528, 16]]}>
        <Ico c="#73727a" w={1.4} d="M14.5 8H1.5M7 2.5L1.5 8L7 13.5" />
        <Ico c="#73727a" w={1.4} d="M1.5 8H14.5M9 2.5L14.5 8L9 13.5" />
        <Ico w={1.5} d="M13.8 9A6 6 0 1 1 12 3.6L14.3 5.8M14.5 1.5V6H10" />
        <Url>
          <Ico w={1.4} d="M8 1L14 3.3V6.5C14 11 11 13.5 8 15C5 13.5 2 11 2 6.5V3.3Z" />
          <Slot $w={38.5}><Ico w={1.4} d="M3.8 7H12.2Q13.4 7 13.4 8.2V13.3Q13.4 14.5 12.2 14.5H3.8Q2.6 14.5 2.6 13.3V8.2Q2.6 7 3.8 7ZM4.7 7V4.3Q4.7 1 8 1Q11.3 1 11.3 4.3V7" /></Slot>
          <UrlText>
            <Fit w={761} size={14.6} font={SANS}>
              https://devirinvestments.s3.eu-west-1.<b>amazonaws.com</b>/PDFs/PDFs+Gratis/Pathfinder_1ª_ed._Hoja_de_personaje.pdf
            </Fit>
          </UrlText>
          <Ico d="M8 1L10 5.7L15 6.2L11.3 9.6L12.4 14.6L8 12L3.6 14.6L4.7 9.6L1 6.2L6 5.7Z" />
        </Url>
        <Ico w={1.4} d="M2.5 2H13.5Q14.5 2 14.5 3V7Q14.5 14 8 14.3Q1.5 14 1.5 7V3Q1.5 2 2.5 2ZM4.8 6.3L8 9.3L11.2 6.3" />
        <Ico w={1.4} d="M8 1V11M4 7L8 11L12 7M1.5 11.5V13.5Q1.5 14.5 2.5 14.5H13.5Q14.5 14.5 14.5 13.5V11.5" />
        <PlasmaDots s={16} />
        <Ico>
          <circle cx="8" cy="8" r="7" fill="#b98c6c" />
          <path d="M1.5 6A7 7 0 0 1 14.5 6Q8 4 1.5 6Z" fill="#8c7a68" />
          <circle cx="4.8" cy="8.3" r="2.4" fill="#8fb8c8" stroke="#dfe6ea" strokeWidth=".8" /><circle cx="11.2" cy="8.3" r="2.4" fill="#8fb8c8" stroke="#dfe6ea" strokeWidth=".8" />
          <path d="M5 12Q8 14 11 12L8 15Z" fill="#e0b89c" />
        </Ico>
        <Ico>
          <path d="M8 0L15 2.5V8Q15 13 8 16Q1 13 1 8V2.5Z" fill="#f01818" />
          <path d="M5.2 7H10.8V12H5.2Z" fill="#fff" /><path d="M6.3 7V5.5Q6.3 3.8 8 3.8Q9.7 3.8 9.7 5.5V7" fill="none" stroke="#fff" strokeWidth="1" />
          <circle cx="8" cy="9.4" r=".9" fill="#f01818" />
        </Ico>
        <Ico>
          <path d="M14 0L12.5 5L14.5 10L13 15H5L2 12L6 8L8 4.5L11 3Z" fill="#e0a93c" />
          <path d="M9 7L12.5 8L11 13L6 14Z" fill="#f4d784" /><path d="M2 15Q0 11 3 9" stroke="#9a938a" fill="none" />
          <circle cx="11" cy="8" r="1" fill="#d05a4a" />
        </Ico>
        <Ico w={1.5} d="M2.5 3.3H13.5M2.5 8H13.5M2.5 12.7H13.5" />
      </Strip>
    </NavBar>
    <PdfBar>
      <Strip $o={0} $at={[[8, 16], [69, 16], [91, 1], [98, 16], [122, 56], [183, 42], [1175, 16], [1197, 1], [1204, 16], [1229, 163], [2411, 16], [2441, 16], [2472, 16], [2501, 16], [2526, 1], [2537, 16]]}>
        <Ico c="#d0d0d2" w={1.6} d="M3 1.5H13Q14.5 1.5 14.5 3V13Q14.5 14.5 13 14.5H3Q1.5 14.5 1.5 13V3Q1.5 1.5 3 1.5ZM8 1.5V14.5M3.6 4.6H5.8M3.6 7H5.8M3.6 9.4H5.8" />
        <Ico c="#85858a" w={1.7} d="M8 15V1.5M1.8 8L8 1.5L14.2 8" />
        <Split />
        <Ico c="#cfcfd1" w={1.9} d="M8 1V14.5M1.8 8L8 14.5L14.2 8" />
        <PageInput><Fit w={21} size={12} font={SANS}>570</Fit></PageInput>
        <Fit w={42} size={12} font={SANS}>(1 de 2)</Fit>
        <Ico c="#cfcfd1" w={2.2} d="M2.5 8H13.5" />
        <Split />
        <Ico c="#cfcfd1" w={2} d="M8 1.5V14.5M1.5 8H14.5" />
        <Zoom><Fit w={23.5} size={12} font={SANS}>90%</Fit><Ico s={9} w={3.4} d="M2 5L8 11L14 5" /></Zoom>
        <Ico><path d="M0 1H7V0H9V1H16V2.6H15V11H1V2.6H0ZM5.5 4V10L10.8 7ZM4 12.5H5.4L4.8 16H3.4ZM10.6 12.5H12L12.6 16H11.2Z" fill="#d0d0d2" fillRule="evenodd" /></Ico>
        <Ico><path d="M3.5 0H12.5V5H14Q16 5 16 7V11H13V16H3V11H0V7Q0 5 2 5H3.5ZM5 1.5V5H11V1.5ZM4.6 9.5V14.5H11.4V9.5ZM5.8 10.6H10.2V11.4H5.8ZM5.8 12.5H10.2V13.3H5.8Z" fill="#d0d0d2" fillRule="evenodd" /></Ico>
        <Ico c="#d0d0d2" w={1.8} d="M7.8 4H6.3L5 1.5H1.5V13.3Q1.5 14.6 2.8 14.6H13.2Q14.5 14.6 14.5 13.3V5Q14.5 4 13.3 4H13M1.5 4H5M10.2 .8V8.3M7.8 6.2L10.2 8.6L12.6 6.2" />
        <Ico><path d="M4 1H12V15.5L8 11.5L4 15.5Z" fill="#d0d0d2" /></Ico>
        <Split />
        <Ico c="#d0d0d2" w={2} d="M2 2L7.5 8L2 14M8.5 2L14 8L8.5 14" />
      </Strip>
    </PdfBar>
  </>
);

/* ---------- desktop panel ---------- */

const Panel = styled.footer`
  height: 44px;
  background: #2a2e32;
`;
const Task = styled.div`
  width: 100%;
  height: 44px;
  display: flex;
  align-items: center;
  justify-content: center;
  padding-bottom: 3px;
  background: ${(p) => p.$bg};
  border-top: 3px solid ${(p) => p.$line};
`;
const Desk = styled.div`
  width: 100%;
  height: 36px;
  background: ${(p) => (p.$on ? 'linear-gradient(90deg, #68aacf 20px, #76b8dc 20px)' : '#404347')};
  border: ${(p) => (p.$on ? '1px solid #84caf0' : '0')};
`;
const Clock = styled.div`
  display: flex;
  flex-direction: column;
  align-items: center;
  gap: 1px;
`;

const Taskbar = () => (
  <Panel>
    <Strip
      $o={0}
      $at={[[10, 24], [56, 28], [107, 30], [149, 50], [211, 30], [253, 50], [2025, 64], [2090, 64], [2155, 64], [2252, 16], [2282, 16], [2312, 16], [2340, 20], [2372, 16], [2402, 16], [2432, 12], [2457, 46], [2526, 16]]}
    >
      <PlasmaDots s={24} />
      <svg width="28" height="28" viewBox="0 0 28 28"><rect width="28" height="28" fill="#3f4a4a" /><path d="M0 28L14 14L28 28Z" fill="#36393c" /><rect width="28" height="1" fill="#66706f" /><path d="M11 8L17 14L11 20" fill="none" stroke="#b5babb" strokeWidth="1.4" /></svg>
      <svg width="30" height="28" viewBox="0 0 30 28">
        <defs><linearGradient id="fo" x2="0" y2="1"><stop offset="0" stopColor="#5aaef4" /><stop offset="1" stopColor="#1f7fe0" /></linearGradient></defs>
        <path d="M0 0H13L15 2H30V10H0Z" fill="#1d6296" /><rect x="1" y="5" width="28" height="8" fill="#fff" />
        <path d="M0 10H11L13 8.6H30V28H0Z" fill="url(#fo)" />
      </svg>
      <Task $bg="#32566b" $line="#3b87b6"><Firefox s={31} id="k" /></Task>
      <svg width="22" height="28" viewBox="0 0 22 28"><path d="M0 0H14L22 8V28H0Z" fill="#1eb0fb" /><path d="M14 0L22 8V0Z" fill="#14587f" /><path d="M6 8.5H16M6 12H13M6 15H16M6 18.5H16" stroke="#8fd6fb" strokeWidth="1.1" /></svg>
      <Task $bg="#4b4d51" $line="#747679">
        <svg width="28" height="28" viewBox="0 0 28 28">
          <path d="M0 18L3 21L21 7V0Z" fill="#0f6fb4" /><path d="M0 9.5L3 7L21 21V28Z" fill="#1787cf" /><path d="M21 0L28 3.5V24.5L21 28Z" fill="#29a7ee" />
        </svg>
      </Task>
      <Desk /><Desk $on /><Desk />
      <Ico w={1.2} c="#fcfcfc" d="M3.5 11.5Q5 10 5 6Q5.5 3 8 3Q10.5 3 11 6Q11 10 12.5 11.5ZM7 14.5H9M2.8 1.5Q1 3 1 5.5M13.2 1.5Q15 3 15 5.5" />
      <Ico>
        <circle cx="8" cy="8" r="6.8" fill="none" stroke="#c8c9ca" strokeWidth="1.2" /><path d="M8 3L12 7.5H9.6V12H6.4V7.5H4Z" fill="#fff" /><circle cx="13" cy="13" r="3" fill="#3daee9" />
      </Ico>
      <Ico c="#fcfcfc" w={1.3} d="M2 2.5H14V15H2ZM4.5 7H11.5M4.5 9.5H11.5M4.5 12H9"><rect x="4" y="0" width="8" height="4.5" fill="#fff" /></Ico>
      <Fit w={19.5} size={18} font={SANS}>es</Fit>
      <Ico c="#fcfcfc" w={1.3} d="M5 2H15.3V11.5H6M1 .8H4V5H1ZM2.5 5V10Q2.5 14.5 7 14.5M7.5 14.8H13.5M10.5 11.5V14.5" />
      <Ico><path d="M1 5.5H4L8 1.5V14.5L4 10.5H1Z" fill="#fff" /><path d="M10.5 5Q12 8 10.5 11M13 3.5Q15.5 8 13 12.5" fill="none" stroke="#8b8e91" /><path d="M.5 .5L15.5 15.5" stroke="#da4453" strokeWidth="1.1" /></Ico>
      <svg width="12" height="6" viewBox="0 0 12 6"><path d="M0 6L6 0L12 6Z" fill="#fff" /></svg>
      <Clock>
        <Fit w={39} size={16} font={SANS}>23:52</Fit>
        <Fit w={46} size={12.4} font={SANS}>20/5/22</Fit>
      </Clock>
      <Ico c="#fcfcfc" w={1.1} d="M.6 .6H15.4V15.4H.6ZM2.5 13.2H13.5" />
    </Strip>
  </Panel>
);

export default function App() {
  return (
    <Screen>
      <Global />
      <Chrome />
      <Viewer>
        <Pages>
          <PageOne />
          <PageTwo />
        </Pages>
        <Scroll />
      </Viewer>
      <Taskbar />
    </Screen>
  );
}
